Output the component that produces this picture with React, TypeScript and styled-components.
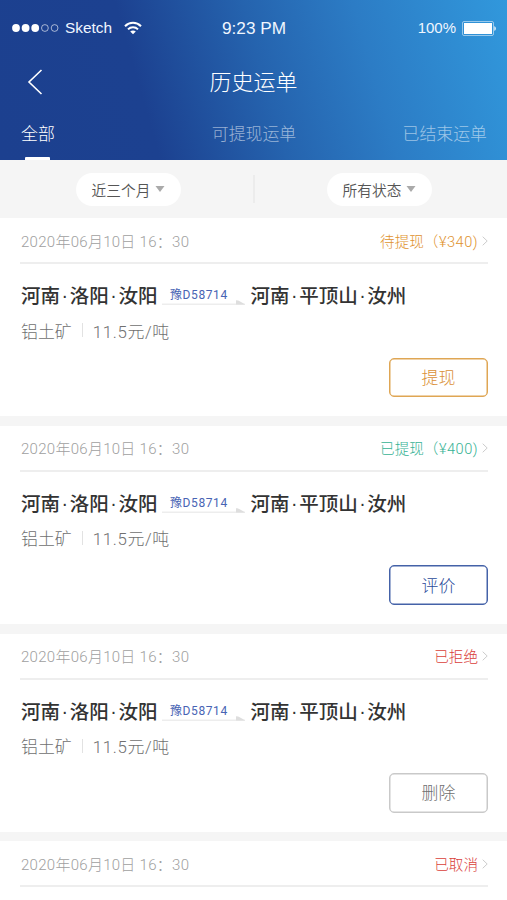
import React from 'react';
import styled, { createGlobalStyle } from 'styled-components';

const cjk = '"Noto Sans CJK SC", sans-serif';

const GlobalStyle = createGlobalStyle`
  * { box-sizing: border-box; }
  body {
    margin: 0;
    background: #fff;
    font-family: Roboto, ${cjk};
    font-weight: 300;
  }
  button { font: inherit; background: none; border: 0; padding: 0; }
`;

const Screen = styled.div`
  width: 507px;
  height: 900px;
  overflow: hidden;
  background: #f5f5f5;
`;

const Header = styled.header`
  height: 159.5px;
  display: flex;
  flex-direction: column;
  color: #fff;
  background: linear-gradient(74deg, #1c408f 0%, #1c4190 29%, #2563ae 52%, #2c7cc5 72%, #3198dc 100%);
`;

const StatusBar = styled.div`
  height: 56px;
  display: grid;
  grid-template-columns: 1fr auto 1fr;
  align-items: center;
  padding: 0 11px 0 12px;
  font-family: "Liberation Sans", sans-serif;
  font-weight: 400;
  font-size: 17.2px;
  color: #f0f6ff;
`;

const Carrier = styled.div`
  display: flex;
  align-items: center;
  font-size: 15.4px;
  line-height: 20px;
`;

const Signal = styled.svg`
  width: 48px;
  height: 10px;
  margin-right: 5px;
`;

const Wifi = styled.svg`
  width: 18px;
  height: 14px;
  margin-left: 12px;
`;

const Power = styled.div`
  display: flex;
  align-items: center;
  justify-content: flex-end;
  gap: 6px;
  font-size: 15px;
  line-height: 18px;
`;

const NavBar = styled.div`
  height: 52px;
  display: grid;
  grid-template-columns: 1fr auto 1fr;
  align-items: center;
  padding: 0 27px;
`;

const BackButton = styled.button`
  display: flex;
  width: 18px;
  height: 28px;
`;

const Title = styled.h1`
  margin: 0;
  padding-top: 2px;
  font-size: 22px;
  line-height: 30px;
  font-weight: 300;
`;

const Tabs = styled.nav`
  flex: 1;
  display: grid;
  grid-template-columns: 1fr auto 1fr;
  padding: 0 20px 0 21px;
`;

const Tab = styled.button<{ $active?: boolean }>`
  display: flex;
  flex-direction: column;
  align-items: center;
  justify-content: space-between;
  padding-top: 14px;
  font-size: 16.9px;
  line-height: 24px;
  color: ${p => (p.$active ? '#fff' : 'rgba(255, 255, 255, 0.55)')};
  &:first-child { justify-self: start; }
  &:last-child { justify-self: end; }
  &::after {
    content: '';
    width: 25px;
    height: 3px;
    background: ${p => (p.$active ? '#fff' : 'transparent')};
    border-radius: 1px 1px 0 0;
  }
`;

const FilterBar = styled.div`
  height: 58.5px;
  display: flex;
  align-items: center;
  justify-content: space-between;
  padding: 1px 75px 0 76px;
`;

const FilterDivider = styled.div`
  width: 2px;
  height: 28px;
  background: #ececec;
`;

const FilterPill = styled.button`
  display: flex;
  align-items: center;
  justify-content: center;
  gap: 5px;
  width: 105px;
  height: 33px;
  border-radius: 17px;
  background: #fff;
  font-size: 14.7px;
  font-weight: 350;
  color: #555;
`;

const Caret = styled.svg`
  width: 10px;
  height: 6px;
`;

const OrderList = styled.main`
  display: flex;
  flex-direction: column;
  gap: 9.8px;
`;

const OrderCard = styled.article`
  height: 198px;
  flex: none;
  padding: 0 19px 0 20px;
  background: #fff;
`;

const OrderHead = styled.div`
  height: 46px;
  display: flex;
  align-items: center;
  justify-content: space-between;
  border-bottom: 2px solid #eeeeee;
`;

const OrderTime = styled.time`
  padding-left: 1px;
  font-size: 15px;
  letter-spacing: 0.28px;
  color: #a0a0a0;
  white-space: pre;
`;

const OrderStatus = styled.div<{ $color: string }>`
  display: flex;
  align-items: center;
  font-size: 14.6px;
  color: ${p => p.$color};
`;

const Amount = styled.span`
  letter-spacing: 0.5px;
`;

const Chevron = styled.svg`
  width: 6px;
  height: 10px;
  margin: 1px 0 0 4px;
`;

const Route = styled.div`
  display: flex;
  align-items: center;
  height: 32px;
  margin: 15px 0 0 1px;
`;

const Place = styled.div`
  display: flex;
  font-family: ${cjk};
  font-size: 19.5px;
  line-height: 28px;
  font-weight: 500;
  color: #333;
`;

const Dot = styled.span`
  width: 9.7px;
  text-align: center;
  font-family: "Liberation Sans", sans-serif;
`;

const Vehicle = styled.div`
  display: flex;
  flex-direction: column;
  align-items: center;
  width: 83px;
  margin: 0 5px;
  padding: 2px 10px 0 0;
`;

const Plate = styled.span`
  font-size: 12px;
  line-height: 16px;
  font-weight: 400;
  letter-spacing: 0.6px;
  white-space: nowrap;
  color: #4864b4;
`;

const Arrow = styled.svg`
  width: 83px;
  height: 5px;
  margin: -3px -10px 0 0;
`;

const Cargo = styled.div`
  display: flex;
  align-items: center;
  height: 24px;
  margin: 7px 0 0 1px;
  font-size: 16.9px;
  color: #707070;
`;

const Price = styled.span`
  letter-spacing: 0.65px;
`;

const CargoDivider = styled.span`
  width: 1px;
  height: 14px;
  margin: 0 10px;
  background: #e2e2e2;
`;

const Actions = styled.div`
  display: flex;
  justify-content: flex-end;
  margin-top: 15.5px;
`;

const ActionButton = styled.button<{ $color: string; $border: string }>`
  width: 99px;
  height: 39.5px;
  padding-bottom: 2px;
  border: 1px solid ${p => p.$border};
  border-radius: 5px;
  box-shadow: inset 0 0 0 0.5px ${p => p.$border};
  font-size: 16.9px;
  color: ${p => p.$color};
`;

interface Order {
  status: string;
  amount?: string;
  color: string;
  action?: { label: string; color: string; border: string };
}

const orders: Order[] = [
  { status: '待提现', amount: '¥340', color: '#e0922e', action: { label: '提现', color: '#da9036', border: '#dfa654' } },
  { status: '已提现', amount: '¥400', color: '#36b294', action: { label: '评价', color: '#2b4b9a', border: '#4462a8' } },
  { status: '已拒绝', color: '#da403a', action: { label: '删除', color: '#707070', border: '#c9c9c9' } },
  { status: '已取消', color: '#da403a' },
];

const PlaceName = ({ parts }: { parts: string[] }) => (
  <Place>
    {parts.map((part, i) => (
      <React.Fragment key={part}>
        {i > 0 && <Dot>·</Dot>}
        <span>{part}</span>
      </React.Fragment>
    ))}
  </Place>
);

const Filter = ({ label }: { label: string }) => (
  <FilterPill>
    {label}
    <Caret viewBox="0 0 10 6"><path d="M0.5 0h9L5 6z" fill="#aaa" /></Caret>
  </FilterPill>
);

const OrderItem = ({ order }: { order: Order }) => (
  <OrderCard>
    <OrderHead>
      <OrderTime>2020年06月10日 16：30</OrderTime>
      <OrderStatus $color={order.color}>
        {order.status}
        {order.amount && <Amount>{`（${order.amount})`}</Amount>}
        <Chevron viewBox="0 0 6 10">
          <path d="M0.7 0.7L5.2 5L0.7 9.3" fill="none" stroke="#ccc" />
        </Chevron>
      </OrderStatus>
    </OrderHead>
    {order.action && (
      <>
        <Route>
          <PlaceName parts={['河南', '洛阳', '汝阳']} />
          <Vehicle>
            <Plate>豫D58714</Plate>
            <Arrow viewBox="0 0 83 5">
              <path d="M0 3.5H83V5H0z" fill="#ededed" />
              <path d="M74 0.2C77 0.2 79 2 83 4.5H74z" fill="#dedede" />
            </Arrow>
          </Vehicle>
          <PlaceName parts={['河南', '平顶山', '汝州']} />
        </Route>
        <Cargo>
          铝土矿
          <CargoDivider />
          <Price>11.5元/吨</Price>
        </Cargo>
        <Actions>
          <ActionButton $color={order.action.color} $border={order.action.border}>
            {order.action.label}
          </ActionButton>
        </Actions>
      </>
    )}
  </OrderCard>
);

export default function App() {
  return (
    <Screen>
      <GlobalStyle />
      <Header>
        <StatusBar>
          <Carrier>
            <Signal viewBox="0 0 48 10">
              {[4, 13.6, 23.2].map(x => <circle key={x} cx={x} cy="5" r="3.9" fill="#fff" />)}
              {[32.9, 42.6].map(x => (
                <circle key={x} cx={x} cy="5" r="3.4" fill="none" stroke="#fff" strokeOpacity="0.6" />
              ))}
            </Signal>
            Sketch
            <Wifi viewBox="0 0 18 14">
              <g fill="none" stroke="#fff" strokeWidth="2">
                <path d="M1 5.2C5.5 0.6 12.5 0.6 17 5.2" />
                <path d="M4 8.4C6.8 5.6 11.2 5.6 14 8.4" />
              </g>
              <path d="M6.2 10.5C7.8 9 10.2 9 11.8 10.5L9 13.3z" fill="#fff" />
            </Wifi>
          </Carrier>
          <span>9:23 PM</span>
          <Power>
            100%
            <svg width="34" height="15" viewBox="0 0 34 15">
              <rect x="0.5" y="0.5" width="31" height="14" rx="1.5" fill="none" stroke="#fff" strokeOpacity="0.5" />
              <rect x="2" y="2" width="28" height="11" fill="#fff" />
              <path d="M32.4 5.2C34.2 5.8 34.2 9.2 32.4 9.8z" fill="#fff" />
            </svg>
          </Power>
        </StatusBar>
        <NavBar>
          <BackButton aria-label="返回">
            <svg width="18" height="28" viewBox="0 0 18 28">
              <path d="M14.5 2L2 14L14.5 26" fill="none" stroke="#fff" strokeWidth="1.6" />
            </svg>
          </BackButton>
          <Title>历史运单</Title>
        </NavBar>
        <Tabs>
          <Tab $active>全部</Tab>
          <Tab>可提现运单</Tab>
          <Tab>已结束运单</Tab>
        </Tabs>
      </Header>
      <FilterBar>
        <Filter label="近三个月" />
        <FilterDivider />
        <Filter label="所有状态" />
      </FilterBar>
      <OrderList>
        {orders.map(order => <OrderItem key={order.status} order={order} />)}
      </OrderList>
    </Screen>
  );
}
